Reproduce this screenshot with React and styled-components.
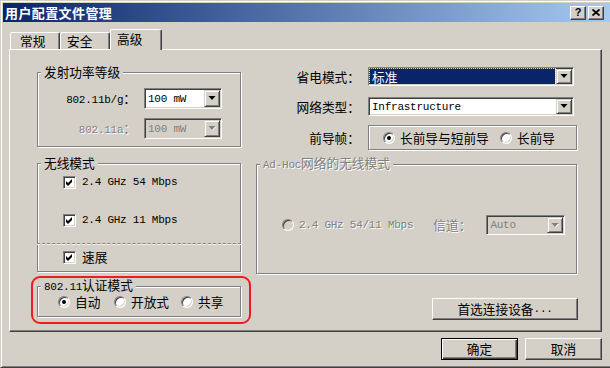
import React from 'react';
import styled, { createGlobalStyle } from 'styled-components';

const GlobalStyle = createGlobalStyle`
  html, body {
    margin: 0;
    padding: 0;
    background: #d4d0c8;
    overflow: hidden;
  }
  body {
    font-family: "Noto Sans CJK SC", "Liberation Sans", sans-serif;
    font-size: 12.7px;
    line-height: 14px;
    color: #000;
  }
`;

const Window = styled.div`
  box-sizing: border-box;
  width: 613px;
  height: 368px;
  padding: 2px;
  background: #d4d0c8;
  border: 1px solid;
  border-color: #d4d0c8 #404040 #404040 #d4d0c8;
  box-shadow: inset 1px 1px 0 #fff, inset -1px -1px 0 #808080;
  display: flex;
  flex-direction: column;
`;

const TitleBar = styled.div`
  height: 19px;
  display: flex;
  align-items: center;
  justify-content: space-between;
  padding: 0 6px 0 2px;
  background: linear-gradient(to right, #0a246a, #a6caf0);
`;

const TitleText = styled.span`
  color: #fff;
  font-weight: bold;
  font-size: 13px;
  letter-spacing: 0.4px;
`;

const CaptionButtons = styled.div`
  display: flex;
  gap: 2px;
`;

const CaptionButton = styled.div`
  box-sizing: border-box;
  width: 16px;
  height: 14px;
  background: #d4d0c8;
  border: 1px solid;
  border-color: #fff #404040 #404040 #fff;
  box-shadow: inset -1px -1px 0 #808080;
  display: flex;
  align-items: center;
  justify-content: center;
  font: bold 11px/1 "Liberation Sans", sans-serif;
`;

const Body = styled.div`
  flex: 1;
  padding: 7px 8px 0 6px;
  display: flex;
  flex-direction: column;
`;

const TabStrip = styled.div`
  display: flex;
  align-items: flex-end;
  height: 20px;
  margin-left: 1px;
`;

const Tab = styled.div`
  box-sizing: border-box;
  width: ${p => p.$w}px;
  height: ${p => (p.$active ? 21 : 17)}px;
  margin-bottom: ${p => (p.$active ? -1 : 0)}px;
  padding: ${p => (p.$active ? 2 : 1)}px 0 0 ${p => p.$pl}px;
  background: #d4d0c8;
  border: 1px solid;
  border-bottom: none;
  border-color: #fff #404040 transparent #fff;
  border-radius: 2px 2px 0 0;
  box-shadow: inset -1px 0 0 #808080;
  position: relative;
  z-index: ${p => (p.$active ? 2 : 1)};
`;

const Panel = styled.div`
  box-sizing: border-box;
  height: 283px;
  padding: 0 0 0 27px;
  border: 1px solid;
  border-color: #fff #404040 #404040 #fff;
  box-shadow: inset -1px -1px 0 #808080;
  display: flex;
  gap: 15px;
`;

const LeftColumn = styled.div`
  width: 204px;
  padding-top: 15px;
  display: flex;
  flex-direction: column;
`;

const RightColumn = styled.div`
  width: 321px;
  padding-top: 17px;
  display: flex;
  flex-direction: column;
`;

const Group = styled.fieldset`
  margin: ${p => p.$mt || 0}px 0 0 0;
  padding: 0;
  min-width: 0;
  border: 1px solid #808080;
  box-shadow: 1px 1px 0 #fff, inset 1px 1px 0 #fff;
`;

const Legend = styled.legend`
  margin-left: 3px;
  padding: 0 3px;
  line-height: 14px;
  background: #d4d0c8;
  color: ${p => (p.$disabled ? '#808080' : '#000')};
  text-shadow: ${p => (p.$disabled ? '1px 1px 0 #fff' : 'none')};
`;

const Mono = styled.span`
  font-family: "Liberation Mono", "DejaVu Sans Mono", monospace;
  font-size: 11px;
  letter-spacing: -0.25px;
`;

const PowerGrid = styled.div`
  display: grid;
  grid-template-columns: 98px 78px;
  column-gap: 8px;
  row-gap: 9px;
  align-items: center;
  padding: 9px 0 7px;
`;

const FieldLabel = styled.span`
  justify-self: end;
  white-space: nowrap;
  color: ${p => (p.$disabled ? '#808080' : '#000')};
  text-shadow: ${p => (p.$disabled ? '1px 1px 0 #fff' : 'none')};
`;

const ComboBox = styled.div`
  box-sizing: border-box;
  width: ${p => p.$w}px;
  height: ${p => p.$h}px;
  padding: 1px;
  display: flex;
  background: ${p => (p.$disabled ? '#d4d0c8' : '#fff')};
  border: 1px solid;
  border-color: #808080 #fff #fff #808080;
  box-shadow: inset 1px 1px 0 #404040, inset -1px -1px 0 #d4d0c8;
`;

const ComboValue = styled.div`
  flex: 1;
  display: flex;
  align-items: center;
  padding-left: 2px;
  margin-right: ${p => (p.$selected ? 1 : 0)}px;
  white-space: nowrap;
  color: ${p => (p.$disabled ? '#808080' : p.$selected ? '#fff' : '#000')};
  background: ${p => (p.$selected ? '#0a246a' : 'transparent')};
  outline: ${p => (p.$selected ? '1px dotted #d4d0c8' : 'none')};
`;

const DropButton = styled.div`
  box-sizing: border-box;
  width: 16px;
  flex: none;
  background: #d4d0c8;
  border: 1px solid;
  border-color: #d4d0c8 #404040 #404040 #d4d0c8;
  box-shadow: inset 1px 1px 0 #fff, inset -1px -1px 0 #808080;
  display: flex;
  align-items: center;
  justify-content: center;
`;

function Combo({ w, h, disabled, selected, children }) {
  return (
    <ComboBox $w={w} $h={h} $disabled={disabled}>
      <ComboValue $disabled={disabled} $selected={selected}>{children}</ComboValue>
      <DropButton>
        <svg width="8" height="5" viewBox="0 0 8 5">
          {disabled && <polygon points="1.5,1 8,1 4.75,4.5" fill="#fff" />}
          <polygon points="0.5,0 7.5,0 4,4" fill={disabled ? '#808080' : '#000'} />
        </svg>
      </DropButton>
    </ComboBox>
  );
}

const CheckRow = styled.div`
  height: 16px;
  margin-top: ${p => p.$mt || 0}px;
  padding-left: 25px;
  display: flex;
  align-items: center;
  gap: 6px;
`;

const CheckBox = styled.span`
  box-sizing: border-box;
  width: 13px;
  height: 13px;
  flex: none;
  background: #fff;
  border: 1px solid;
  border-color: #808080 #fff #fff #808080;
  box-shadow: inset 1px 1px 0 #404040, inset -1px -1px 0 #d4d0c8;
  display: flex;
  align-items: center;
  justify-content: center;
`;

function Check() {
  return (
    <CheckBox>
      <svg width="7" height="7" viewBox="0 0 7 7">
        <polygon points="0,2 2,4 6,0 6,3 2,7 0,5" fill="#000" />
      </svg>
    </CheckBox>
  );
}

const ModeList = styled.div`
  padding: 4px 0 6px;
`;

const DashedRule = styled.div`
  margin: 15px -1px 4px;
  border-top: 1px dashed #808080;
  border-bottom: 1px dashed #fff;
`;

const Annotated = styled.div`
  position: relative;
  margin-top: 6px;

  &::after {
    content: '';
    position: absolute;
    top: -2px;
    left: -6px;
    right: -10px;
    bottom: -7px;
    border: 2px solid #ee1c1c;
    border-radius: 9px;
    pointer-events: none;
  }
`;

const RadioLine = styled.div`
  height: 16px;
  padding: 0 0 6px ${p => p.$pl}px;
  display: flex;
  align-items: center;
`;

const RadioItem = styled.label`
  width: ${p => (p.$w ? `${p.$w}px` : 'auto')};
  flex: none;
  display: flex;
  align-items: center;
  gap: 5px;
  color: ${p => (p.$disabled ? '#808080' : '#000')};
  text-shadow: ${p => (p.$disabled ? '1px 1px 0 #fff' : 'none')};
`;

const Radio = styled.span`
  box-sizing: border-box;
  width: 12px;
  height: 12px;
  flex: none;
  border-radius: 50%;
  background: ${p => (p.$disabled ? '#d4d0c8' : '#fff')};
  border: 1px solid;
  border-color: #808080 #fff #fff #808080;
  box-shadow: inset 1px 1px 0 #404040, inset -1px -1px 0 #d4d0c8;
  display: flex;
  align-items: center;
  justify-content: center;

  &::after {
    content: '';
    display: ${p => (p.$checked ? 'block' : 'none')};
    width: 4px;
    height: 4px;
    border-radius: 50%;
    background: #000;
  }
`;

const FieldRow = styled.div`
  display: grid;
  grid-template-columns: 104px auto;
  column-gap: 8px;
  align-items: center;
  margin-top: ${p => p.$mt || 0}px;
`;

const PreambleBox = styled.div`
  box-sizing: border-box;
  width: 209px;
  height: 25px;
  padding-left: 14px;
  display: flex;
  align-items: center;
  border: 1px solid #808080;
  box-shadow: 1px 1px 0 #fff, inset 1px 1px 0 #fff;
`;

const AdHocRow = styled.div`
  padding: 43px 0 38px 25px;
  display: flex;
  align-items: center;
`;

const ChannelLabel = styled.span`
  margin: 0 15px 0 20px;
  color: #808080;
  text-shadow: 1px 1px 0 #fff;
`;

const Button = styled.div`
  box-sizing: border-box;
  width: ${p => p.$w}px;
  height: 22px;
  background: #d4d0c8;
  border: 1px solid;
  border-color: ${p => (p.$default ? '#000' : '#fff #404040 #404040 #fff')};
  box-shadow: ${p =>
    p.$default
      ? 'inset 1px 1px 0 #fff, inset -1px -1px 0 #404040, inset -2px -2px 0 #808080'
      : 'inset -1px -1px 0 #808080'};
  display: flex;
  align-items: center;
  justify-content: center;
  white-space: nowrap;
`;

const DeviceButton = styled(Button)`
  align-self: flex-end;
  margin: 24px -1px 0 0;
`;

const ButtonRow = styled.div`
  display: flex;
  justify-content: flex-end;
  gap: 7px;
  margin-top: 6px;
`;

export default function App() {
  return (
    <>
      <GlobalStyle />
      <Window>
        <TitleBar>
          <TitleText>用户配置文件管理</TitleText>
          <CaptionButtons>
            <CaptionButton>?</CaptionButton>
            <CaptionButton>
              <svg width="8" height="7" viewBox="0 0 8 7">
                <path d="M0.5 0.5 L7.5 6.5 M7.5 0.5 L0.5 6.5" stroke="#000" strokeWidth="1.7" />
              </svg>
            </CaptionButton>
          </CaptionButtons>
        </TitleBar>

        <Body>
          <TabStrip>
            <Tab $w={50} $pl={9}>常规</Tab>
            <Tab $w={50} $pl={6}>安全</Tab>
            <Tab $w={52} $pl={6} $active>高级</Tab>
          </TabStrip>

          <Panel>
            <LeftColumn>
              <Group>
                <Legend>发射功率等级</Legend>
                <PowerGrid>
                  <FieldLabel><Mono>802.11b/g</Mono>：</FieldLabel>
                  <Combo w={78} h={21}><Mono>100 mW</Mono></Combo>
                  <FieldLabel $disabled><Mono>802.11a</Mono>：</FieldLabel>
                  <Combo w={78} h={21} disabled><Mono>100 mW</Mono></Combo>
                </PowerGrid>
              </Group>

              <Group $mt={9}>
                <Legend>无线模式</Legend>
                <ModeList>
                  <CheckRow><Check /><Mono>2.4 GHz 54 Mbps</Mono></CheckRow>
                  <CheckRow $mt={22}><Check /><Mono>2.4 GHz 11 Mbps</Mono></CheckRow>
                  <DashedRule />
                  <CheckRow><Check />速展</CheckRow>
                </ModeList>
              </Group>

              <Annotated>
                <Group>
                  <Legend><Mono>802.11</Mono>认证模式</Legend>
                  <RadioLine $pl={20}>
                    <RadioItem $w={56}><Radio $checked />自动</RadioItem>
                    <RadioItem $w={67}><Radio />开放式</RadioItem>
                    <RadioItem><Radio />共享</RadioItem>
                  </RadioLine>
                </Group>
              </Annotated>
            </LeftColumn>

            <RightColumn>
              <FieldRow>
                <FieldLabel>省电模式：</FieldLabel>
                <Combo w={206} h={19} selected>标准</Combo>
              </FieldRow>
              <FieldRow $mt={11}>
                <FieldLabel>网络类型：</FieldLabel>
                <Combo w={206} h={19}><Mono>Infrastructure</Mono></Combo>
              </FieldRow>
              <FieldRow $mt={9}>
                <FieldLabel>前导帧：</FieldLabel>
                <PreambleBox>
                  <RadioItem $w={117}><Radio $checked />长前导与短前导</RadioItem>
                  <RadioItem><Radio />长前导</RadioItem>
                </PreambleBox>
              </FieldRow>

              <Group $mt={6}>
                <Legend $disabled><Mono>Ad-Hoc</Mono>网络的无线模式</Legend>
                <AdHocRow>
                  <RadioItem $disabled><Radio $disabled /><Mono>2.4 GHz 54/11 Mbps</Mono></RadioItem>
                  <ChannelLabel>信道：</ChannelLabel>
                  <Combo w={79} h={20} disabled><Mono>Auto</Mono></Combo>
                </AdHocRow>
              </Group>

              <DeviceButton $w={146}>首选连接设备<Mono>...</Mono></DeviceButton>
            </RightColumn>
          </Panel>

          <ButtonRow>
            <Button $w={77} $default>确定</Button>
            <Button $w={77}>取消</Button>
          </ButtonRow>
        </Body>
      </Window>
    </>
  );
}
